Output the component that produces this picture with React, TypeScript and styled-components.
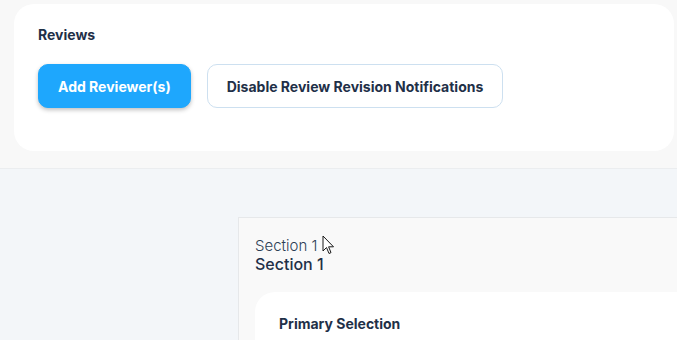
import React from "react";
import styled, {createGlobalStyle} from "styled-components";

const GlobalStyle = createGlobalStyle`
  html, body {
    margin: 0;
    padding: 0;
    background: #f3f6f9;
    font-family: Inter, "Noto Sans", sans-serif;
    color: #1f3048;
    overflow: hidden;
  }
`;

const Page = styled.div`
  position: relative;
  width: 677px;
  height: 340px;
  overflow: hidden;
`;

const TopBar = styled.div`
  background: #f8f8f8;
  border-bottom: 1px solid #ebedef;
  padding: 4px 3px 17px 14px;
`;

const Card = styled.div`
  background: #ffffff;
  border-radius: 20px;
  height: 147px;
  box-sizing: border-box;
  padding: 23px 24px 0;
`;

const Title = styled.div`
  font-size: 14px;
  font-weight: 700;
  line-height: 16px;
`;

const Actions = styled.div`
  display: flex;
  gap: 16px;
  margin-top: 21px;
`;

const Button = styled.button<{ $primary?: boolean }>`
  height: 44px;
  box-sizing: border-box;
  padding: 0 19px;
  border-radius: 10px;
  font-family: inherit;
  font-size: 14px;
  font-weight: 700;
  cursor: pointer;
  background: ${p => p.$primary ? "#1ea7fd" : "#ffffff"};
  color: ${p => p.$primary ? "#ffffff" : "#1f3048"};
  border: 1px solid ${p => p.$primary ? "#1ea7fd" : "#cde0f0"};
  box-shadow: ${p => p.$primary ? "0 2px 4px rgba(0,0,0,0.25)" : "none"};
`;

const Content = styled.div`
  padding: 48px 0 0 238px;
`;

const Panel = styled.div`
  background: #f9f9f9;
  border: 1px solid #e6e8ea;
  border-right: none;
  height: 200px;
  padding: 19px 0 0 16px;
`;

const Caption = styled.div`
  font-size: 15px;
  font-weight: 300;
  line-height: 18px;
  color: #2c3e55;
`;

const Heading = styled.div`
  font-size: 16px;
  font-weight: 500;
  line-height: 19px;
  color: #1f3048;
`;

const InnerCard = styled.div`
  margin-top: 18px;
  background: #ffffff;
  border-radius: 20px 0 0 0;
  height: 120px;
  padding: 24px 0 0 24px;
`;

const Cursor = styled.svg`
  position: absolute;
  left: 322px;
  top: 235px;
`;

export default function App() {
    return (
        <Page>
            <GlobalStyle/>
            <TopBar>
                <Card>
                    <Title>Reviews</Title>
                    <Actions>
                        <Button $primary>Add Reviewer(s)</Button>
                        <Button>Disable Review Revision Notifications</Button>
                    </Actions>
                </Card>
            </TopBar>
            <Content>
                <Panel>
                    <Caption>Section 1</Caption>
                    <Heading>Section 1</Heading>
                    <InnerCard>
                        <Title>Primary Selection</Title>
                    </InnerCard>
                </Panel>
            </Content>
            <Cursor width="14" height="21" viewBox="0 0 14 21">
                <path d="M1 1 L1 16 L4.5 12.5 L7 18.5 L9 17.6 L6.6 11.8 L11.5 11.8 Z"
                      fill="#ffffff" stroke="#1a1a1a" strokeWidth="1" strokeLinejoin="miter"/>
            </Cursor>
        </Page>
    );
}
